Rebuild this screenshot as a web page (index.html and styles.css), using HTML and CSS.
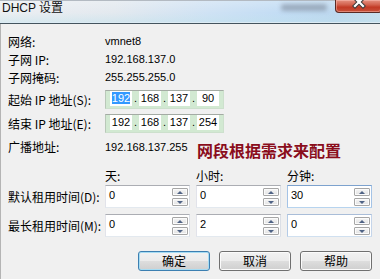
FILE: index.html
```html
<!DOCTYPE html>
<html lang="zh-CN">
<head>
<meta charset="utf-8">
<title>DHCP 设置</title>
<link rel="stylesheet" href="styles.css">
</head>
<body>
<div class="window">
  <div class="titlebar">
    <span class="title">DHCP 设置</span>
    <span class="blurred"></span>
    <span class="close">
      <svg width="47" height="13" viewBox="0 0 47 13">
        <path d="M20 -1 L28 7 M28 -1 L20 7" stroke="#3b3b3b" stroke-width="4.2" stroke-linecap="square"/>
        <path d="M20 -1 L28 7 M28 -1 L20 7" stroke="#ffffff" stroke-width="2.2" stroke-linecap="square"/>
      </svg>
    </span>
  </div>
  <div class="content">
    <div class="row info"><span class="label">网络:</span><span class="value">vmnet8</span></div>
    <div class="row info"><span class="label">子网 IP:</span><span class="value">192.168.137.0</span></div>
    <div class="row info"><span class="label">子网掩码:</span><span class="value">255.255.255.0</span></div>
    <div class="row iprow first">
      <span class="label">起始 IP 地址(S):</span>
      <div class="ipbox">
        <span class="ipfield"><span class="sel">192</span></span><span class="dot">.</span>
        <span class="ipfield">168</span><span class="dot">.</span>
        <span class="ipfield">137</span><span class="dot">.</span>
        <span class="ipfield">90</span>
      </div>
    </div>
    <div class="row iprow">
      <span class="label">结束 IP 地址(E):</span>
      <div class="ipbox">
        <span class="ipfield">192</span><span class="dot">.</span>
        <span class="ipfield">168</span><span class="dot">.</span>
        <span class="ipfield">137</span><span class="dot">.</span>
        <span class="ipfield">254</span>
      </div>
    </div>
    <div class="row info bcast">
      <span class="label">广播地址:</span><span class="value bval">192.168.137.255</span>
      <span class="note">网段根据需求来配置</span>
    </div>

    <div class="lease-head">
      <span class="lease-label"></span>
      <span class="col-head">天:</span>
      <span class="col-head">小时:</span>
      <span class="col-head">分钟:</span>
    </div>
    <div class="lease-row">
      <span class="lease-label">默认租用时间(D):</span>
      <div class="spin"><span class="num">0</span><span class="arrows"><span class="arr up"></span><span class="arr down"></span></span></div>
      <div class="spin"><span class="num">0</span><span class="arrows"><span class="arr up"></span><span class="arr down"></span></span></div>
      <div class="spin focus"><span class="num">30</span><span class="arrows"><span class="arr up"></span><span class="arr down"></span></span></div>
    </div>
    <div class="lease-row second">
      <span class="lease-label">最长租用时间(M):</span>
      <div class="spin"><span class="num">0</span><span class="arrows"><span class="arr up"></span><span class="arr down"></span></span></div>
      <div class="spin"><span class="num">2</span><span class="arrows"><span class="arr up"></span><span class="arr down"></span></span></div>
      <div class="spin hover"><span class="num">0</span><span class="arrows"><span class="arr up"></span><span class="arr down"></span></span></div>
    </div>

    <div class="buttons">
      <button class="btn default">确定</button>
      <button class="btn">取消</button>
      <button class="btn">帮助</button>
    </div>
  </div>
</div>
</body>
</html>
```
FILE: styles.css
```css
* { box-sizing: border-box; }
html, body {
  margin: 0;
  padding: 0;
  width: 380px;
  height: 279px;
  overflow: hidden;
  background: #f0f0f0;
}
body {
  font-family: "Noto Sans CJK SC", "Liberation Sans", sans-serif;
  font-size: 12px;
  color: #000;
}
.window {
  width: 380px;
  height: 279px;
  overflow: hidden;
}
.titlebar {
  height: 24px;
  border-bottom: 1px solid #44545e;
  display: flex;
  align-items: flex-start;
  background:
    linear-gradient(to bottom, rgba(255,255,255,0.25) 0%, rgba(255,255,255,0) 55%, rgba(190,225,235,0.45) 100%),
    linear-gradient(to right, #eceff2 0%, #e3e9ef 30%, #cfe2f4 55%, #c2dcf4 75%, #bdd8ef 88%, #c8dfef 100%);
  box-shadow: inset 0 1px 0 #b3bac2, inset 0 -1px 0 #dcebf4;
}
.title {
  font-family: "Liberation Sans", "Noto Sans CJK SC", sans-serif;
  font-size: 12px;
  line-height: 16px;
  padding-left: 2px;
  color: #111;
}
.blurred {
  margin-left: auto;
  margin-top: 4px;
  margin-right: 8px;
  width: 46px;
  height: 7px;
  border-radius: 3px;
  background: rgba(120,132,148,0.55);
  filter: blur(2px);
}
.close {
  width: 47px;
  height: 13px;
  margin-right: -2px;
  border: 1px solid #5a2a24;
  border-top: none;
  border-radius: 0 0 4px 4px;
  background: linear-gradient(to bottom, #e59282 0%, #d2604c 40%, #c23a25 60%, #c8523c 100%);
  box-shadow: inset 0 0 0 1px rgba(255,200,190,0.45);
  display: block;
  overflow: hidden;
}
.close svg { display: block; margin: -1px 0 0 -1px; }

.content {
  border-left: 1px solid #b4b4b4;
  height: 255px;
  padding: 8px 0 0 7px;
}
.row {
  display: flex;
  align-items: center;
}
.info { height: 18px; }
.label {
  width: 97px;
  flex: none;
  white-space: nowrap;
}
.value {
  font-family: "Liberation Sans", sans-serif;
  font-size: 11px;
}
.iprow { height: 19px; margin-top: 5px; }
.iprow.first { margin-top: 4px; }
.ipbox {
  display: flex;
  align-items: flex-start;
  width: 119px;
  height: 19px;
  padding: 0 4px 2px 4px;
  background: #d2e9d2;
  border: 1px solid #cde0cd;
  border-top-color: #a4aba4;
  border-left-color: #b9c8b9;
  font-family: "Liberation Sans", sans-serif;
  font-size: 11px;
}
.ipfield {
  width: 22px;
  height: 15px;
  line-height: 15px;
  background: #fff;
  text-align: center;
}
.dot {
  width: 7px;
  line-height: 15px;
  text-align: center;
}
.sel {
  display: inline-block;
  background: #3399ff;
  color: #fff;
  line-height: 12px;
  padding: 0 0 0 0;
}
.bcast { margin-top: 5px; align-items: flex-start; }
.bcast .label, .bcast .bval { line-height: 18px; }
.bval { width: 92px; }
.note {
  font-size: 16px;
  line-height: 16px;
  font-weight: bold;
  color: #8a0d1c;
  margin-top: 4px;
  white-space: nowrap;
  letter-spacing: 0;
}

.lease-head, .lease-row {
  display: flex;
  gap: 6px;
  align-items: center;
}
.lease-head { height: 16px; margin-top: 11px; }
.lease-row { height: 23px; margin-top: 2px; }
.lease-row.second { margin-top: 6px; }
.lease-label { width: 91px; flex: none; white-space: nowrap; }
.col-head { width: 85px; flex: none; }
.spin {
  width: 85px;
  height: 23px;
  flex: none;
  display: flex;
  background: #fff;
  border: 1px solid;
  border-color: #abadb3 #dbdfe6 #e3e9ef #e2e3ea;
}
.spin.focus { border-color: #7da2ce #a4c3e6 #b7d4ef #a4c3e6; }
.spin.hover { border-color: #a9bdd8 #c5d5ea #d0e0f0 #b4cbe6; }
.num {
  flex: 1;
  padding-left: 3px;
  font-family: "Liberation Sans", sans-serif;
  font-size: 11px;
  line-height: 19px;
}
.arrows {
  width: 16px;
  margin-right: 1px;
  padding-top: 2px;
  display: flex;
  flex-direction: column;
  gap: 2px;
}
.arr {
  height: 8px;
  border: 1px solid #a6a6a6;
  border-radius: 1px;
  background: linear-gradient(to bottom, #f6f6f6, #e2e2e2);
  box-shadow: inset 0 0 0 1px #fbfbfb;
  display: flex;
  align-items: center;
  justify-content: center;
}
.arr::after {
  content: "";
  width: 0;
  height: 0;
  border-left: 3.5px solid transparent;
  border-right: 3.5px solid transparent;
}
.arr.up::after { border-bottom: 3px solid #4f6385; }
.arr.down::after { border-top: 3px solid #4f6385; }

.buttons {
  display: flex;
  justify-content: flex-end;
  gap: 9px;
  margin-top: 14px;
  padding-right: 8px;
}
.btn {
  width: 72px;
  height: 20px;
  padding: 0;
  font-family: "Noto Sans CJK SC", sans-serif;
  font-size: 12px;
  line-height: 16px;
  color: #000;
  border: 1px solid #707070;
  border-radius: 3px;
  background: linear-gradient(to bottom, #f2f2f2 0%, #ebebeb 48%, #dddddd 52%, #cfcfcf 100%);
  box-shadow: inset 0 0 0 1px #fbfbfb;
}
.btn.default {
  border-color: #3c7fb1;
  box-shadow: inset 0 0 0 1px #a6dcf3;
}
```
